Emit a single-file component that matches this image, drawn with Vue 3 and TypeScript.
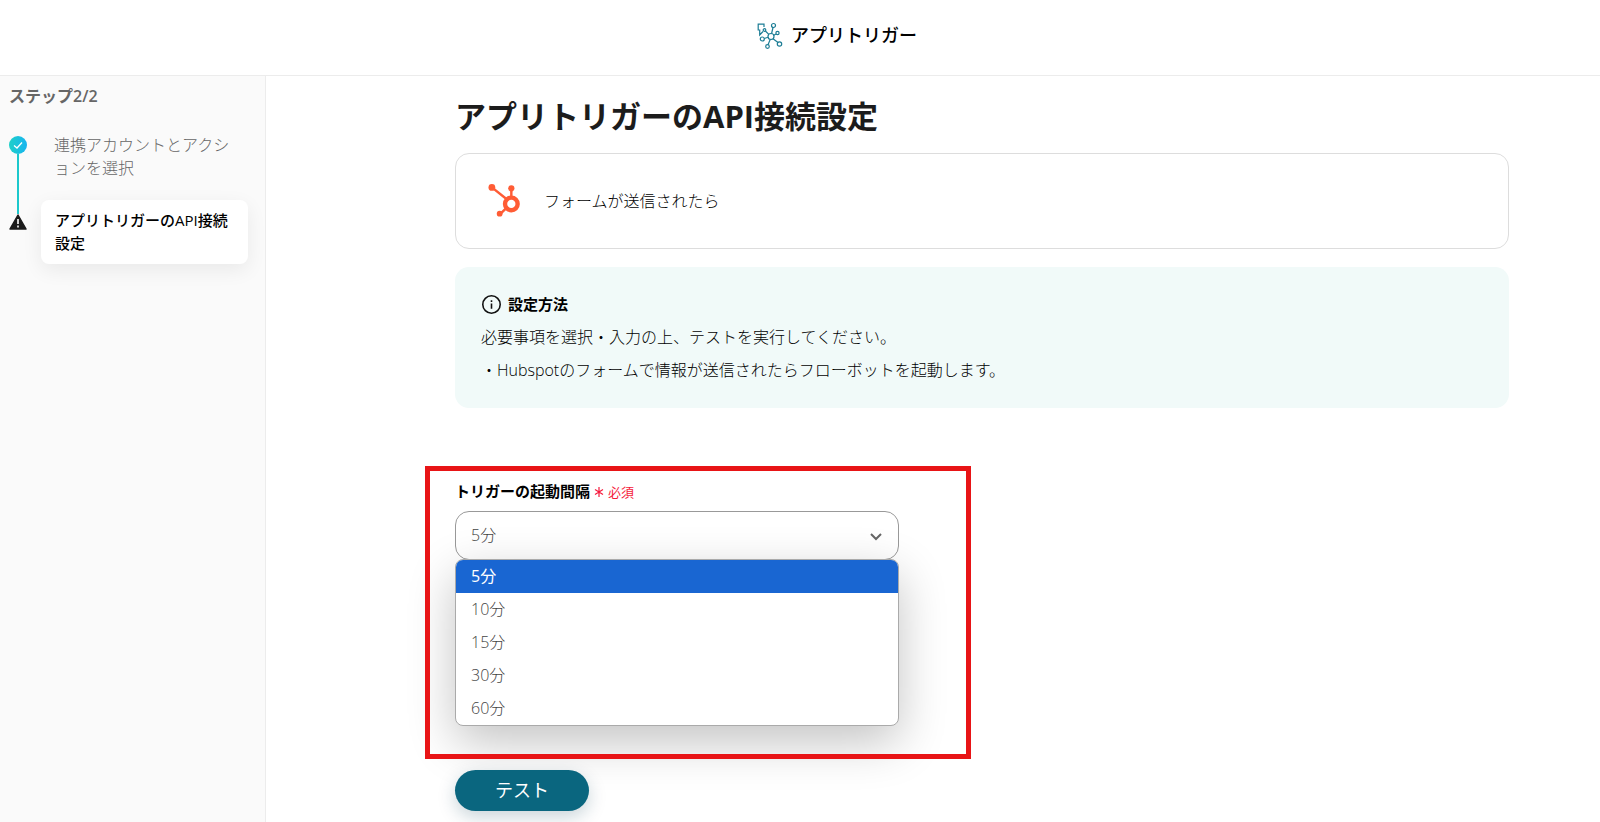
<script setup lang="ts">
import { ref } from 'vue'

const intervals: string[] = ['5分', '10分', '15分', '30分', '60分']
const selected = ref<string>('5分')
</script>

<template>
  <div class="page">
    <header class="header">
      <svg class="logo" viewBox="0 0 26 28" aria-hidden="true">
        <g fill="none" stroke="#1c7d95" stroke-width="1.2">
          <circle cx="14" cy="14.500" r="3" />
          <circle cx="16.500" cy="3.500" r="2" />
          <circle cx="20.500" cy="11" r="1.600" />
          <circle cx="22.500" cy="22" r="2.200" />
          <circle cx="10.500" cy="24.500" r="1.800" />
          <circle cx="5.300" cy="17" r="2" />
          <circle cx="7.500" cy="8" r="1.300" />
          <path d="M14.600 11.500 16 5.500M16.800 13.300 19 12M16 16.800l5 3.700M13.200 17.400 11 22.700M11 15.200 7.300 16.500M11.800 12.400 8.400 9M7 5V2.200H1.200V8h1.500v5L6 9.500" />
        </g>
      </svg>
      <span class="brand">アプリトリガー</span>
    </header>

    <div class="body">
      <aside class="sidebar">
        <p class="step-count">ステップ2/2</p>
        <ol class="steps">
          <li class="step">
            <div class="rail">
              <svg class="mark" viewBox="0 0 18 18" aria-hidden="true">
                <defs>
                  <linearGradient id="done" x1="0" y1="0" x2="1" y2="0">
                    <stop offset="0" stop-color="#1fd0c8" />
                    <stop offset="1" stop-color="#17b4f0" />
                  </linearGradient>
                </defs>
                <circle cx="9" cy="9" r="9" fill="url(#done)" />
                <path d="M5 9.500 8 12 13 6.500" fill="none" stroke="#fff" stroke-width="1.300" />
              </svg>
              <span class="line"></span>
            </div>
            <a class="step-label" href="#">連携アカウントとアクションを選択</a>
          </li>
          <li class="step">
            <div class="rail">
              <svg class="warn" viewBox="0 0 18 16" aria-hidden="true">
                <path d="M9 1 17 15H1Z" fill="#1b1b1b" stroke="#1b1b1b" stroke-width="1.500" stroke-linejoin="round" />
                <path d="M9 5v5M9 11.500v2" stroke="#fff" stroke-width="1.600" />
              </svg>
            </div>
            <a class="step-label current" href="#" aria-current="step">アプリトリガーのAPI接続設定</a>
          </li>
        </ol>
      </aside>

      <main class="main">
        <h1 class="title">アプリトリガーのAPI接続設定</h1>

        <section class="app-card">
          <svg class="hub" viewBox="0 0 36 36" aria-hidden="true">
            <g stroke="#ff5c35" fill="none">
              <circle cx="24" cy="21" r="6.500" stroke-width="4.500" />
              <path d="M4 4 19 16M24 6v9M13 31l6-6" stroke-width="2.500" />
            </g>
            <g fill="#ff5c35">
              <circle cx="4" cy="4" r="3.500" />
              <circle cx="24" cy="5" r="3.200" />
              <circle cx="12" cy="31" r="3" />
            </g>
          </svg>
          <span>フォームが送信されたら</span>
        </section>

        <section class="guide">
          <h2 class="guide-title">
            <svg class="info" viewBox="0 0 20 20" aria-hidden="true">
              <circle cx="10" cy="10" r="8.300" fill="none" stroke="#111" stroke-width="1.500" />
              <path d="M10 9v5M10 6v1.500" stroke="#111" stroke-width="1.500" />
            </svg>
            設定方法
          </h2>
          <p>必要事項を選択・入力の上、テストを実行してください。</p>
          <p>・Hubspotのフォームで情報が送信されたらフローボットを起動します。</p>
        </section>

        <section class="field">
          <label class="field-label" for="interval">トリガーの起動間隔 <span class="required"><svg class="asterisk" viewBox="0 0 10 10" aria-hidden="true"><path d="M5 0v10M1 2.500 9 7.500M9 2.500 1 7.500" stroke="currentColor" stroke-width="1.200" /></svg>必須</span></label>
          <div class="select-wrap">
            <select id="interval" v-model="selected" class="select">
              <option v-for="item in intervals" :key="item" :value="item">{{ item }}</option>
            </select>
            <svg class="chevron" viewBox="0 0 12 8" aria-hidden="true">
              <path d="M1 1l5 5 5-5" fill="none" stroke="#666" stroke-width="2" />
            </svg>
            <ul class="menu" role="listbox" aria-label="トリガーの起動間隔">
              <li
                v-for="item in intervals"
                :key="item"
                class="option"
                :class="{ active: item === selected }"
                role="option"
                :aria-selected="item === selected"
                @click="selected = item"
              >{{ item }}</li>
            </ul>
          </div>
          <div class="highlight"></div>
        </section>

        <button class="test" type="button">テスト</button>
      </main>
    </div>
  </div>
</template>

<style>
body {
  margin: 0;
}
</style>

<style scoped>
.page {
  display: flex;
  flex-direction: column;
  min-height: 100vh;
  box-sizing: border-box;
  background: #fff;
  color: #000;
  font-family: "Open Sans", "Noto Sans CJK JP", sans-serif;
  font-size: 16px;
  font-weight: 300;
  line-height: 23px;
}

.header {
  display: flex;
  align-items: center;
  justify-content: center;
  gap: 8px;
  padding: 21px 0 25px 74px;
  border-bottom: 1px solid #ececec;
}

.logo {
  width: 26px;
  height: 28px;
}

.brand {
  font-size: 18px;
  font-weight: 500;
  line-height: 29px;
}

.body {
  display: flex;
  flex: 1;
}

.sidebar {
  box-sizing: border-box;
  flex: 0 0 266px;
  padding: 9px 17px 0 9px;
  border-right: 1px solid #ececec;
  background: #fafafa;
}

.step-count {
  margin: 0 0 26px;
  color: #666;
  font-weight: 600;
}

.steps {
  margin: 0;
  padding: 0;
  list-style: none;
}

.step {
  display: flex;
  gap: 14px;
}

.rail {
  display: flex;
  flex: 0 0 18px;
  flex-direction: column;
  align-items: center;
}

.mark {
  flex: none;
  width: 18px;
  height: 18px;
  margin-top: 2px;
}

.line {
  flex: 1;
  width: 2px;
  margin-bottom: -14px;
  background: #1cc8cc;
}

.warn {
  width: 18px;
  height: 16px;
  margin-top: 14px;
}

.step-label {
  box-sizing: border-box;
  flex: 1;
  padding: 0 12px 20px 13px;
  color: #666;
  text-decoration: none;
}

.step-label.current {
  padding: 9px 8px 9px 14px;
  border-radius: 8px;
  background: #fff;
  box-shadow: 0 6px 20px rgba(0, 0, 0, 0.07);
  color: #000;
  font-size: 15px;
  font-weight: 500;
}

.main {
  flex: 1;
  min-width: 0;
  padding: 18px 91px 11px 189px;
}

.title {
  margin: 0 0 14px;
  color: #1c1c1c;
  font-size: 31px;
  font-weight: 700;
  line-height: 45px;
}

.app-card {
  display: flex;
  align-items: center;
  gap: 21px;
  padding: 29px 31px 29px 32px;
  border: 1px solid #ddd;
  border-radius: 14px;
}

.hub {
  width: 35px;
  height: 36px;
}

.guide {
  margin-top: 18px;
  padding: 21px 26px;
  border-radius: 14px;
  background: #f1faf9;
  line-height: 33px;
}

.guide p {
  margin: 0;
}

.guide-title {
  display: flex;
  align-items: center;
  gap: 6px;
  margin: 0;
  font-size: 15px;
  font-weight: 600;
}

.info {
  width: 21px;
  height: 21px;
}

.field {
  position: relative;
  margin-top: 72px;
}

.field-label {
  display: block;
  margin-bottom: 7px;
  font-size: 15px;
  font-weight: 600;
}

.required {
  color: #f5193c;
  font-size: 13px;
  font-weight: 400;
}

.asterisk {
  width: 10px;
  height: 10px;
  margin-right: 4px;
}

.select-wrap {
  position: relative;
  width: 444px;
  max-width: 100%;
}

.select {
  display: block;
  box-sizing: border-box;
  width: 100%;
  height: 49px;
  padding: 0 15px;
  border: 1px solid #999;
  border-radius: 14px;
  background: #fff;
  color: #444;
  font: inherit;
  appearance: none;
}

.chevron {
  position: absolute;
  top: 22px;
  right: 17px;
  width: 12px;
  height: 8px;
}

.menu {
  position: absolute;
  top: 100%;
  left: 0;
  right: 0;
  margin: -1px 0 0;
  padding: 0;
  overflow: hidden;
  border: 1px solid #aaa;
  border-radius: 8px;
  background: #fff;
  box-shadow: 0 16px 48px rgba(0, 0, 0, 0.24);
  color: #444;
  line-height: 33px;
  list-style: none;
}

.option {
  padding: 0 15px;
}

.option.active {
  background: #1966d2;
  color: #fff;
  font-weight: 400;
}

.highlight {
  position: absolute;
  top: -14px;
  left: -30px;
  width: 536px;
  height: 283px;
  border: 5px solid #e81416;
  pointer-events: none;
}

.test {
  position: relative;
  display: block;
  margin-top: 210px;
  padding: 6px 40px;
  border: 0;
  border-radius: 21px;
  background: #0a667f;
  box-shadow: 0 6px 18px rgba(10, 60, 80, 0.22);
  color: #fff;
  font-family: inherit;
  font-size: 18px;
  font-weight: 400;
  line-height: 29px;
}
</style>
